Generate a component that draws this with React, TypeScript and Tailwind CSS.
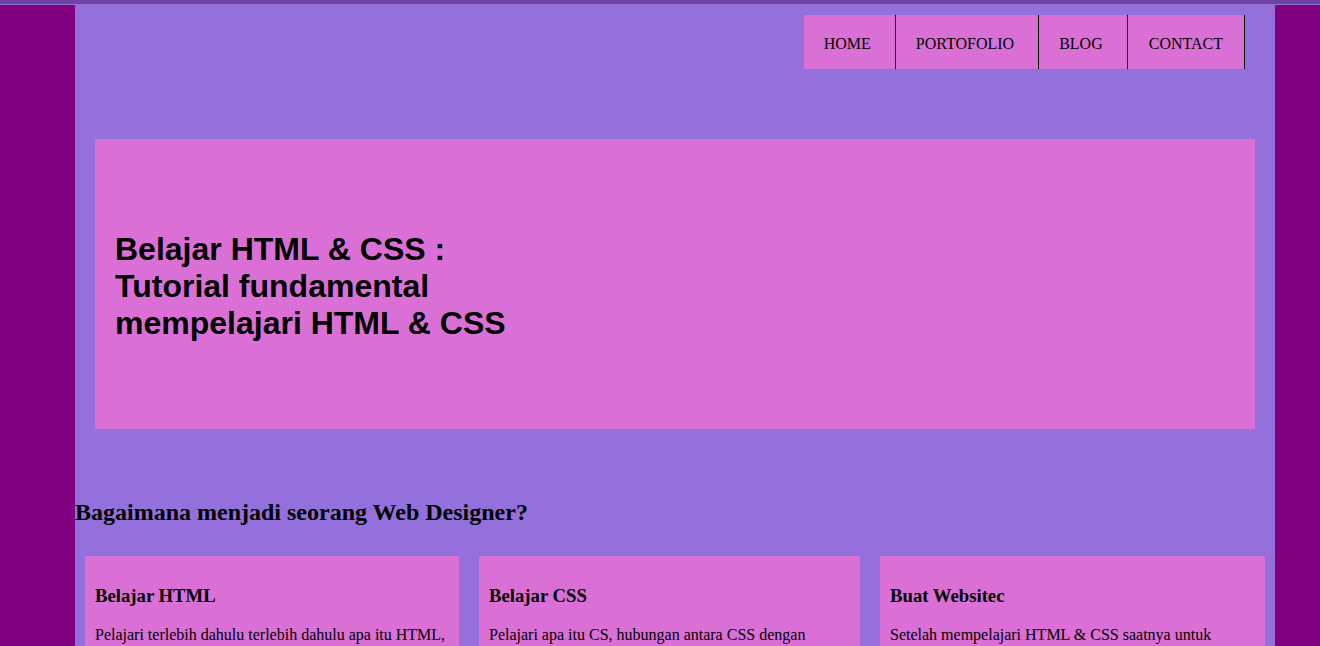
import React from 'react';

const menu = ['HOME', 'PORTOFOLIO', 'BLOG', 'CONTACT'];

const cards = [
  {
    title: 'Belajar HTML',
    w: 'w-[374px]',
    body: 'Pelajari terlebih dahulu terlebih dahulu apa itu HTML, bagaimana struktur dasar HTML dan tag-tag yang sering digunakan dalam membuat halaman website.',
  },
  {
    title: 'Belajar CSS',
    w: 'w-[381px]',
    body: 'Pelajari apa itu CS, hubungan antara CSS dengan HTML, serta cara memberi style pada halaman website yang sudah dibuat.',
  },
  {
    title: 'Buat Websitec',
    w: 'w-[385px]',
    body: 'Setelah mempelajari HTML & CSS saatnya untuk membuat website sendiri dan mempraktekkan semua yang sudah dipelajari.',
  },
];

const App = () => {
  return (
    <div className="min-h-[646px] bg-[#800080] font-['Liberation_Serif',serif] text-black">
      <div className="h-[4px] bg-[#6f43a5]" />
      <div className="h-px bg-[#9274cf]" />

      <div className="ml-[75px] w-[1200px] bg-[#9370db] pb-10">
        <nav className="flex justify-end pt-[10px] pr-[30px]">
          <ul className="flex bg-[#da70d6]">
            {menu.map((item) => (
              <li key={item} className="border-r border-black pt-5 pb-4 pl-5 pr-6 text-base leading-[18px] last:pl-[21px] last:pr-[21px]">
                {item}
              </li>
            ))}
          </ul>
        </nav>

        <header className="mx-5 mt-[70px] flex h-[290px] items-center bg-[#da70d6] px-5">
          <h1 className="mt-1 w-[420px] font-['Liberation_Sans',sans-serif] text-[32px] leading-[37px] font-bold">
            Belajar HTML &amp; CSS : Tutorial fundamental mempelajari HTML &amp; CSS
          </h1>
        </header>

        <section>
          <h2 className="mt-[69px] mb-[30px] text-2xl leading-[28px] font-bold">
            Bagaimana menjadi seorang Web Designer?
          </h2>
          <div className="flex gap-5 px-[10px]">
            {cards.map((c) => (
              <article key={c.title} className={`${c.w} bg-[#da70d6] px-[10px] pt-[29px] pb-[10px]`}>
                <h3 className="text-[18.72px] leading-[21px] font-bold">{c.title}</h3>
                <p className="mt-[19px] text-base leading-[19px]">{c.body}</p>
              </article>
            ))}
          </div>
        </section>
      </div>
    </div>
  );
};

export default App;
